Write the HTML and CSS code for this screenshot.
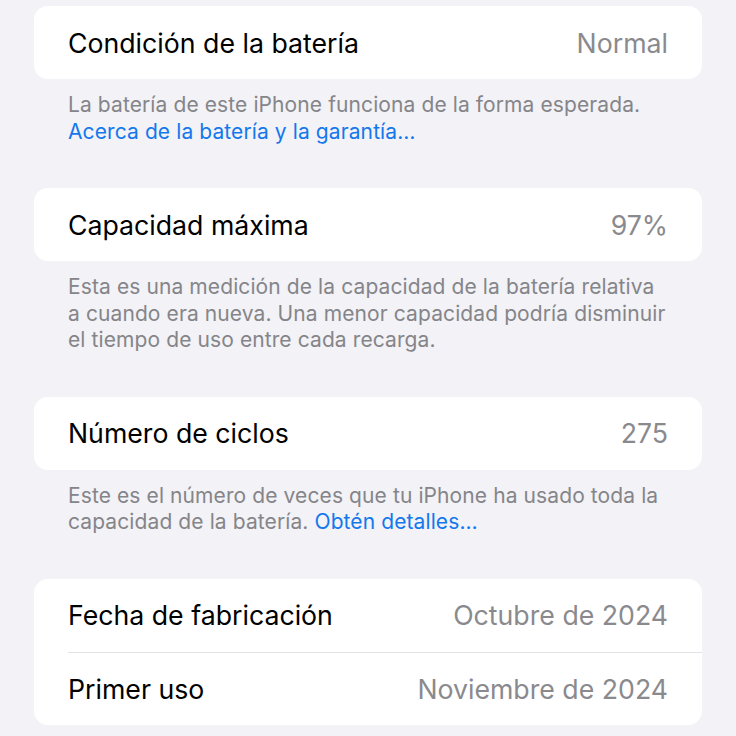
FILE: index.html
```html
<!DOCTYPE html>
<html lang="es">
<head>
<meta charset="utf-8">
<title>Batería</title>
<link rel="stylesheet" href="styles.css">
</head>
<body>
<main class="page">
  <section class="group">
    <div class="card">
      <div class="row"><span class="label">Condición de la batería</span><span class="value">Normal</span></div>
    </div>
    <p class="footer">La batería de este iPhone funciona de la forma esperada.<br><a class="link" href="#">Acerca de la batería y la garantía…</a></p>
  </section>
  <section class="group">
    <div class="card">
      <div class="row"><span class="label">Capacidad máxima</span><span class="value">97%</span></div>
    </div>
    <p class="footer">Esta es una medición de la capacidad de la batería relativa<br>a cuando era nueva. Una menor capacidad podría disminuir<br>el tiempo de uso entre cada recarga.</p>
  </section>
  <section class="group">
    <div class="card">
      <div class="row"><span class="label">Número de ciclos</span><span class="value">275</span></div>
    </div>
    <p class="footer">Este es el número de veces que tu iPhone ha usado toda la<br>capacidad de la batería. <a class="link" href="#">Obtén detalles…</a></p>
  </section>
  <section class="group">
    <div class="card">
      <div class="row"><span class="label">Fecha de fabricación</span><span class="value">Octubre de 2024</span></div>
      <div class="row"><span class="label">Primer uso</span><span class="value">Noviembre de 2024</span></div>
    </div>
  </section>
</main>
</body>
</html>
```
FILE: styles.css
```css
html, body {
  margin: 0;
  padding: 0;
  background: #f2f2f7;
}
body {
  font-family: Inter, "Noto Sans", "Liberation Sans", sans-serif;
  -webkit-font-smoothing: antialiased;
}
.page {
  padding: 6px 34px 0;
}
.card {
  background: #ffffff;
  border-radius: 14px;
  overflow: hidden;
}
.row {
  display: flex;
  align-items: center;
  justify-content: space-between;
  height: 73px;
  margin-left: 34px;
  padding-right: 34px;
  box-sizing: border-box;
}
.row + .row {
  border-top: 1px solid #e3e3e6;
  height: 73px;
}
.label {
  font-size: 26.7px;
  color: #000000;
}
.value {
  font-size: 26.7px;
  color: #8a8a8e;
}
.footer {
  margin: 0 0 43px;
  padding: 13px 34px 0;
  font-size: 21px;
  line-height: 26.5px;
  color: #858589;
  letter-spacing: 0.1px;
}
.link {
  color: #1478ec;
  text-decoration: none;
}
```
